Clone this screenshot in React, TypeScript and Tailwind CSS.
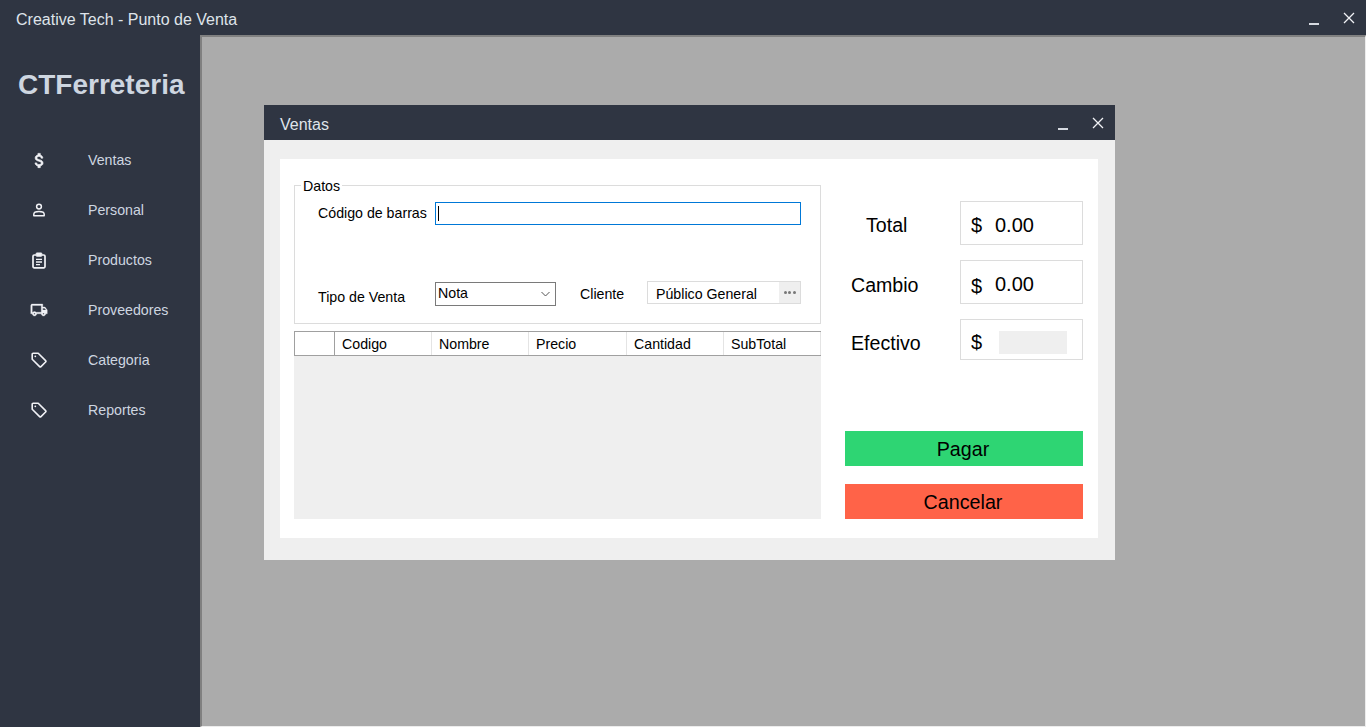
import { MdAttachMoney, MdOutlineLocalShipping } from "react-icons/md";

function ClipboardIcon() {
  return (
    <svg width="14" height="17" viewBox="0 0 14 17" fill="none" stroke="currentColor" strokeWidth="1.7">
      <path d="M4 3 H2.2 A1.2 1.2 0 0 0 1 4.2 V14.6 A1.2 1.2 0 0 0 2.2 15.8 H11.8 A1.2 1.2 0 0 0 13 14.6 V4.2 A1.2 1.2 0 0 0 11.8 3 H10" />
      <rect x="4.2" y="1" width="5.6" height="3.2" rx="0.5" fill="currentColor" strokeWidth="1" />
      <path d="M4 7.3 H10 M4 10 H10 M4 12.7 H8" strokeWidth="1.3" />
    </svg>
  );
}

function PersonIcon() {
  return (
    <svg width="14" height="14" viewBox="0 0 14 14" fill="none" stroke="currentColor" strokeWidth="1.5">
      <circle cx="7" cy="3.6" r="2.4" />
      <path d="M1.8 12.8 V11.2 C1.8 9.4 4.4 8.6 7 8.6 C9.6 8.6 12.2 9.4 12.2 11.2 V12.8 Z" strokeLinejoin="round" />
    </svg>
  );
}

function TagIcon() {
  return (
    <svg width="16" height="16" viewBox="0 0 16 16" fill="none" stroke="currentColor" strokeWidth="1.6" strokeLinejoin="round">
      <path d="M1.2 2.2 A1 1 0 0 1 2.2 1.2 H7.2 L14.6 8.6 A1 1 0 0 1 14.6 10 L10 14.6 A1 1 0 0 1 8.6 14.6 L1.2 7.2 Z" />
      <circle cx="4.3" cy="4.3" r="0.9" fill="currentColor" stroke="none" />
    </svg>
  );
}

const nav = [
  { label: "Ventas", icon: <MdAttachMoney size={19} strokeWidth={0.8} /> },
  { label: "Personal", icon: <PersonIcon /> },
  { label: "Productos", icon: <ClipboardIcon /> },
  { label: "Proveedores", icon: <MdOutlineLocalShipping size={18} strokeWidth={0.4} /> },
  { label: "Categoria", icon: <TagIcon /> },
  { label: "Reportes", icon: <TagIcon /> },
];

const cols = [
  { name: "Codigo", w: "w-[97px]" },
  { name: "Nombre", w: "w-[97px]" },
  { name: "Precio", w: "w-[98px]" },
  { name: "Cantidad", w: "w-[97px]" },
  { name: "SubTotal", w: "w-[97px]" },
];

function WinButtons() {
  return (
    <div className="flex items-center gap-[24px]">
      <div className="mt-[13px] h-[2px] w-[10px] bg-[#d5d9e0]" />
      <svg width="12" height="12" viewBox="0 0 12 12" className="text-[#f1f2f6]">
        <path d="M1 1 L11 11 M11 1 L1 11" stroke="currentColor" strokeWidth="1.3" />
      </svg>
    </div>
  );
}

function Amount({ label, labelClass, h, mb, dollarPt, value, valuePt }: { label: string; labelClass: string; h: string; mb: string; dollarPt: string; value?: string; valuePt?: string }) {
  return (
    <div className={`flex ${h} items-center ${mb}`}>
      <div className={`w-[115px] text-[19.6px] text-black ${labelClass}`}>{label}</div>
      <div className={`${h} flex w-[123px] items-center border border-[#dcdcdc] pl-[10px] text-[20px] text-black`}>
        <span className={`w-[24px] ${dollarPt}`}>$</span>
        {value ? <span className={valuePt}>{value}</span> : <div className="ml-[4px] mt-[6px] h-[23px] w-[68px] bg-[#efefef]" />}
      </div>
    </div>
  );
}

export default function App() {
  return (
    <div className="flex h-[727px] w-[1366px] flex-col overflow-hidden bg-[#2f3542] font-['Liberation_Sans',Arial,sans-serif]">
      <header className="flex h-[35px] shrink-0 items-center justify-between pl-4 pr-[11px] text-[16px] text-[#dfe4ea]">
        <span className="pt-[4px]">Creative Tech - Punto de Venta</span>
        <WinButtons />
      </header>
      <div className="flex min-h-0 flex-1">
        <aside className="w-[200px] shrink-0">
          <div className="flex h-[100px] items-center pl-[18px] text-[28px] font-bold text-[#ced6e0]">CTFerreteria</div>
          <nav className="flex flex-col">
            {nav.map(({ label, icon }) => (
              <div key={label} className="flex h-[50px] items-center">
                <div className="flex w-[78px] justify-center text-[#f1f2f6] [&_path[fill=none]]:hidden">{icon}</div>
                <span className="ml-[10px] pt-[2px] text-[14.2px] text-[#ced6e0]">{label}</span>
              </div>
            ))}
          </nav>
        </aside>
        <main className="relative flex-1 border-b border-l-2 border-r border-t-2 border-b-[#ececec] border-l-[#808080] border-r-[#ececec] border-t-[#808080] bg-[#ababab]">
          <section className="absolute left-[62px] top-[68px] w-[851px] bg-[#efefef]">
            <div className="flex h-[35px] items-center justify-between bg-[#2f3542] pl-4 pr-[11px] text-[16px] text-[#dfe4ea]">
              <span className="pt-[4px]">Ventas</span>
              <WinButtons />
            </div>
            <div className="pb-[22px] pl-4 pr-[17px] pt-[19px]">
              <div className="flex h-[379px] bg-white pl-[14px] pr-[15px] pt-[26px] text-[14.2px] text-black">
                <div className="w-[527px]">
                  <div className="h-[139px] border border-[#dcdcdc]">
                    <div className="relative h-full pl-[23px] pt-[16px]">
                      <span className="absolute -top-[10px] left-[6px] bg-white px-[2px]">Datos</span>
                      <div className="flex h-[23px] items-center">
                        <span className="w-[117px]">Código de barras</span>
                        <div className="flex h-[23px] w-[366px] items-center border border-[#0078d7] pl-[2px]">
                          <div className="h-[15px] w-px bg-black" />
                        </div>
                      </div>
                      <div className="mt-[57px] flex h-[24px] items-center">
                        <span className="w-[117px] pt-[8px]">Tipo de Venta</span>
                        <div className="flex h-[24px] w-[121px] items-center justify-between border border-[#7a7a7a] pl-[2px] pr-[5px]">
                          <span>Nota</span>
                          <svg width="9" height="6" viewBox="0 0 9 6" className="text-[#555]">
                            <path d="M0.5 1 L4.5 5 L8.5 1" fill="none" stroke="currentColor" strokeWidth="1" />
                          </svg>
                        </div>
                        <span className="ml-[24px] w-[67px] pt-[1px]">Cliente</span>
                        <div className="-mt-[3px] flex h-[23px] w-[154px] items-center justify-between border border-[#dcdcdc] pl-2">
                          <span className="pt-[5px]">Público General</span>
                          <div className="flex h-full w-[21px] items-center justify-center gap-[1.5px] bg-[#efefef]">
                            <i className="h-[3px] w-[3px] rounded-full bg-[#777]" />
                            <i className="h-[3px] w-[3px] rounded-full bg-[#777]" />
                            <i className="h-[3px] w-[3px] rounded-full bg-[#777]" />
                          </div>
                        </div>
                      </div>
                    </div>
                  </div>
                  <div className="mt-[7px] flex h-[188px] flex-col bg-[#efefef]">
                    <div className="flex h-[25px] border-y border-y-[#a0a0a0] bg-white">
                      <div className="w-[41px] border-x border-x-[#a0a0a0]" />
                      {cols.map((c) => (
                        <div key={c.name} className={`${c.w} flex items-center border-r border-r-[#e4e4e4] pl-[7px] pt-[2px]`}>
                          {c.name}
                        </div>
                      ))}
                    </div>
                  </div>
                </div>
                <div className="ml-[24px] w-[238px] pt-[16px]">
                  <Amount label="Total" labelClass="pl-[21px] pt-[5px]" h="h-[44px]" mb="mb-[15px]" dollarPt="pt-[4px]" value="0.00" valuePt="pt-[4px]" />
                  <Amount label="Cambio" labelClass="pl-[6px] pt-[7px]" h="h-[44px]" mb="mb-[15px]" dollarPt="pt-[8px]" value="0.00" valuePt="pt-[4px]" />
                  <Amount label="Efectivo" labelClass="pl-[6px] pt-[9px]" h="h-[41px]" mb="mb-[71px]" dollarPt="pt-[5px]" />
                  <div className="flex h-[35px] items-center justify-center bg-[#2ed573] pr-[2px] pt-[2px] text-[19.7px]">Pagar</div>
                  <div className="mt-[18px] flex h-[35px] items-center justify-center bg-[#ff6348] pr-[2px] pt-[2px] text-[19.7px]">Cancelar</div>
                </div>
              </div>
            </div>
          </section>
        </main>
      </div>
    </div>
  );
}
